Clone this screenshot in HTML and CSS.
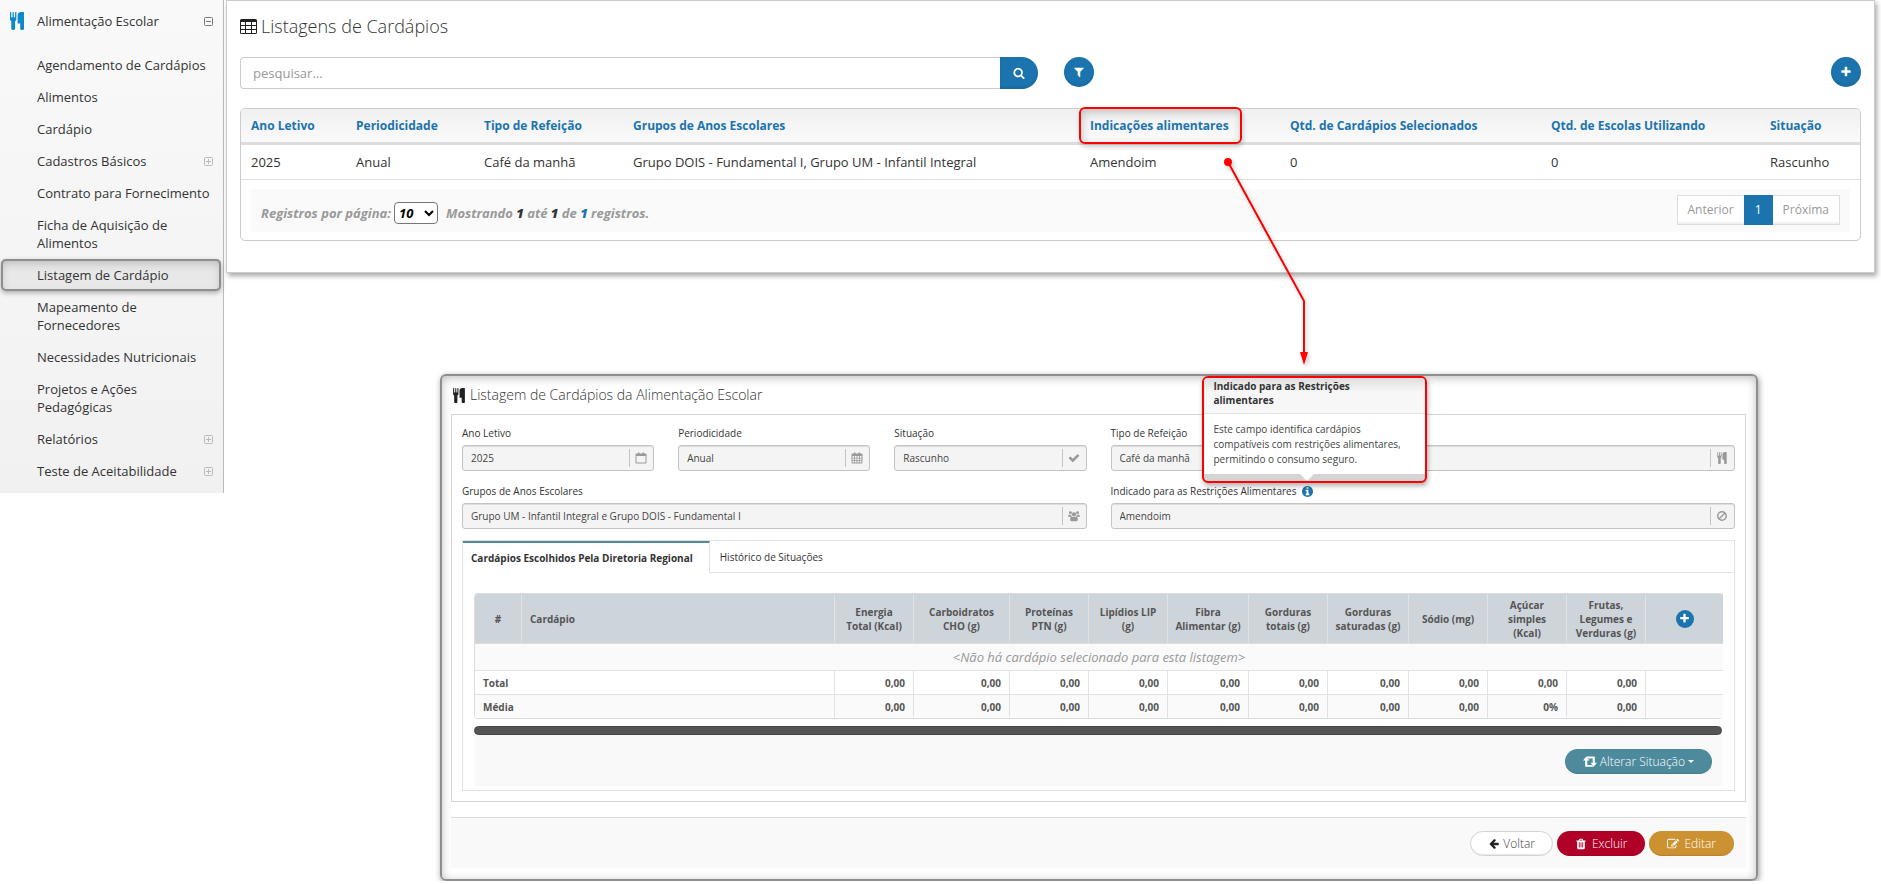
FILE: index.html
```html
<!DOCTYPE html>
<html lang="pt-BR">
<head>
  <meta charset="UTF-8" />
  <meta name="viewport" content="width=device-width, initial-scale=1.0"/>
  <title>Listagens de Cardápios</title>
  <link rel="stylesheet" href="styles.css">
</head>
<body>
  <!-- Icon set -->
  <svg class="sprite" aria-hidden="true">
    <symbol id="i-cutlery" viewBox="192 0 1408 1792"><path d="M832 64v640q0 61-35.500 111t-92.500 70v779q0 52-38 90t-90 38h-128q-52 0-90-38t-38-90v-779q-57-20-92.500-70t-35.500-111v-640q0-26 19-45t45-19 45 19 19 45v416q0 26 19 45t45 19 45-19 19-45v-416q0-26 19-45t45-19 45 19 19 45v416q0 26 19 45t45 19 45-19 19-45v-416q0-26 19-45t45-19 45 19 19 45zm768 0v1600q0 52-38 90t-90 38h-128q-52 0-90-38t-38-90v-512h-224q-13 0-22.500-9.500t-9.500-22.500v-800q0-132 94-226t226-94h256q26 0 45 19t19 45z"/></symbol>
    <symbol id="i-table" viewBox="0 0 17 15"><path fill-rule="evenodd" d="M1.500 0h14A1.500 1.500 0 0 1 17 1.500v12a1.500 1.500 0 0 1-1.500 1.500h-14A1.500 1.500 0 0 1 0 13.500v-12A1.500 1.500 0 0 1 1.500 0zM1 3v3h4V3zm5 0v3h5V3zm6 0v3h4V3zM1 7v3h4V7zm5 0v3h5V7zm6 0v3h4V7zM1 11v3h4v-3zm5 0v3h5v-3zm6 0v3h4v-3z"/></symbol>
    <symbol id="i-search" viewBox="0 0 1792 1792"><path d="M1216 832q0-185-131.500-316.500t-316.500-131.500-316.500 131.500-131.500 316.500 131.500 316.500 316.500 131.500 316.500-131.500 131.500-316.500zm512 832q0 52-38 90t-90 38q-54 0-90-38l-343-342q-179 124-399 124-143 0-273.500-55.500t-225-150-150-225-55.500-273.500 55.500-273.500 150-225 225-150 273.500-55.500 273.500 55.500 225 150 150 225 55.500 273.500q0 220-124 399l343 343q37 37 37 90z"/></symbol>
    <symbol id="i-filter" viewBox="0 0 1792 1792"><path d="M1595 295q17 41-14 70l-493 493v742q0 42-39 59-13 5-25 5-27 0-45-19l-256-256q-19-19-19-45v-486l-493-493q-31-29-14-70 17-39 59-39h1280q42 0 59 39z"/></symbol>
    <symbol id="i-plus" viewBox="0 0 1792 1792"><path d="M1600 736v192q0 40-28 68t-68 28h-416v416q0 40-28 68t-68 28h-192q-40 0-68-28t-28-68v-416h-416q-40 0-68-28t-28-68v-192q0-40 28-68t68-28h416v-416q0-40 28-68t68-28h192q40 0 68 28t28 68v416h416q40 0 68 28t28 68z"/></symbol>
    <symbol id="i-check" viewBox="0 0 1792 1792"><path d="M1671 566q0 40-28 68l-724 724-136 136q-28 28-68 28t-68-28l-136-136-362-362q-28-28-28-68t28-68l136-136q28-28 68-28t68 28l294 295 656-657q28-28 68-28t68 28l136 136q28 28 28 68z"/></symbol>
    <symbol id="i-ban" viewBox="0 0 12 12"><g fill="none" stroke="currentColor" stroke-width="1.500"><circle cx="6" cy="6" r="4.200"/><path d="M3 9l6-6"/></g></symbol>
    <symbol id="i-calendar-o" viewBox="0 0 12 12"><path fill-rule="evenodd" d="M1.500 1.500H3V.5h1.500v1h3v-1H9v1h1.500q1 0 1 1v8q0 1-1 1h-9q-1 0-1-1v-8q0-1 1-1zM1.500 4v6.500h9V4z"/></symbol>
    <symbol id="i-calendar" viewBox="0 0 12 12"><path fill-rule="evenodd" d="M1.500 1.500H3V.5h1.500v1h3v-1H9v1h1.500q1 0 1 1v8q0 1-1 1h-9q-1 0-1-1v-8q0-1 1-1zM1.500 4v1.700h1.600V4zm2.400 0v1.700h1.700V4zm2.500 0v1.700h1.700V4zm2.500 0v1.700h1.600V4zM1.500 6.400v1.700h1.600V6.400zm2.400 0v1.700h1.700V6.400zm2.500 0v1.700h1.700V6.400zm2.500 0v1.700h1.600V6.400zM1.500 8.800v1.700h1.600V8.800zm2.400 0v1.700h1.700V8.800zm2.500 0v1.700h1.700V8.800zm2.500 0v1.700h1.600V8.800z"/></symbol>
    <symbol id="i-users" viewBox="0 0 14 12"><circle cx="2.800" cy="2.200" r="1.700"/><circle cx="11.200" cy="2.200" r="1.700"/><circle cx="7" cy="4" r="2.500"/><path d="M0 6.600q0-2.200 1.400-2.200l2.200.4q.1 1.200.9 2H0zM14 6.600q0-2.200-1.400-2.200l-2.200.4q-.1 1.200-.9 2H14zM2.500 10.500q0-4 2.200-4 1 .8 2.300.8t2.300-.8q2.200 0 2.200 4 0 1.500-1.500 1.500H4q-1.500 0-1.500-1.500z"/></symbol>
    <symbol id="i-info" viewBox="128 128 1536 1536"><path d="M1152 1376v-160q0-14-9-23t-23-9h-96v-512q0-14-9-23t-23-9h-320q-14 0-23 9t-9 23v160q0 14 9 23t23 9h96v320h-96q-14 0-23 9t-9 23v160q0 14 9 23t23 9h448q14 0 23-9t9-23zm-128-896v-160q0-14-9-23t-23-9h-192q-14 0-23 9t-9 23v160q0 14 9 23t23 9h192q14 0 23-9t9-23zm640 416q0 209-103 385.500t-279.500 279.500-385.500 103-385.500-103-279.500-279.500-103-385.500 103-385.500 279.500-279.500 385.500-103 385.500 103 279.500 279.500 103 385.500z"/></symbol>
    <symbol id="i-arrow-left" viewBox="0 0 1792 1920"><path d="M1664 896v128q0 53-32.500 90.500t-84.500 37.500h-704l293 294q38 36 38 90t-38 90l-75 76q-37 37-90 37-52 0-91-37l-651-652q-37-37-37-90 0-52 37-91l651-650q38-38 91-38 52 0 90 38l75 74q38 38 38 91t-38 91l-293 293h704q52 0 84.500 37.500t32.500 90.500z"/></symbol>
    <symbol id="i-retweet" viewBox="0 0 13 10"><path d="M3 0l3 3.700H4v4h4.200L9.800 9.500H2.600Q2 9.500 2 9V3.700H0zM10 9.500L7 5.800h2v-4H4.800L3.200 0h7.200q.6 0 .6.600v5.200h2z"/></symbol>
    <symbol id="i-trash" viewBox="0 0 1792 1792"><path d="M704 1376v-704q0-14-9-23t-23-9h-64q-14 0-23 9t-9 23v704q0 14 9 23t23 9h64q14 0 23-9t9-23zm256 0v-704q0-14-9-23t-23-9h-64q-14 0-23 9t-9 23v704q0 14 9 23t23 9h64q14 0 23-9t9-23zm256 0v-704q0-14-9-23t-23-9h-64q-14 0-23 9t-9 23v704q0 14 9 23t23 9h64q14 0 23-9t9-23zm-544-992h448l-48-117q-7-9-17-11h-317q-10 2-17 11zm928 32v64q0 14-9 23t-23 9h-96v948q0 83-47 143.500t-113 60.500h-832q-66 0-113-58.500t-47-141.500v-952h-96q-14 0-23-9t-9-23v-64q0-14 9-23t23-9h309l70-167q15-37 54-63t79-26h320q40 0 79 26t54 63l70 167h309q14 0 23 9t9 23z"/></symbol>
    <symbol id="i-edit" viewBox="0 0 1792 1792"><path d="M888 1184l116-116-152-152-116 116v56h96v96h56zm440-720q-16-16-33 1l-350 350q-17 17-1 33t33-1l350-350q17-17 1-33zm80 594v190q0 119-84.500 203.500t-203.500 84.500h-832q-119 0-203.500-84.500t-84.500-203.500v-832q0-119 84.500-203.500t203.500-84.500h832q63 0 117 25 15 7 18 23 3 17-9 29l-49 49q-14 14-32 8-23-6-45-6h-832q-66 0-113 47t-47 113v832q0 66 47 113t113 47h832q66 0 113-47t47-113v-126q0-13 9-22l64-64q15-15 35-7t20 29zm-96-738l288 288-672 672h-288v-288zm444 132l-92 92-288-288 92-92q28-28 68-28t68 28l152 152q28 28 28 68t-28 68z"/></symbol>
    <symbol id="i-box-plus" viewBox="0 0 9 9"><path fill="none" stroke="currentColor" d="M1.500.5h6q1 0 1 1v6q0 1-1 1h-6q-1 0-1-1v-6q0-1 1-1zM2 4.500h5M4.500 2v5"/></symbol>
    <symbol id="i-box-minus" viewBox="0 0 9 9"><path fill="none" stroke="currentColor" d="M1.500.5h6q1 0 1 1v6q0 1-1 1h-6q-1 0-1-1v-6q0-1 1-1zM2 4.500h5"/></symbol>
  </svg>

  <div class="page">
    <nav class="sidebar">
      <a href="#" class="menu-title">
        <svg class="menu-icon"><use href="#i-cutlery"/></svg>
        <span>Alimentação Escolar</span>
        <svg class="toggle open"><use href="#i-box-minus"/></svg>
      </a>
      <ul class="menu">
        <li><a href="#">Agendamento de Cardápios</a></li>
        <li><a href="#">Alimentos</a></li>
        <li><a href="#">Cardápio</a></li>
        <li><a href="#">Cadastros Básicos <svg class="toggle"><use href="#i-box-plus"/></svg></a></li>
        <li><a href="#">Contrato para Fornecimento</a></li>
        <li><a href="#">Ficha de Aquisição de Alimentos</a></li>
        <li><a href="#" class="active">Listagem de Cardápio</a></li>
        <li><a href="#">Mapeamento de Fornecedores</a></li>
        <li><a href="#">Necessidades Nutricionais</a></li>
        <li><a href="#">Projetos e Ações Pedagógicas</a></li>
        <li><a href="#">Relatórios <svg class="toggle"><use href="#i-box-plus"/></svg></a></li>
        <li><a href="#">Teste de Aceitabilidade <svg class="toggle"><use href="#i-box-plus"/></svg></a></li>
      </ul>
    </nav>

    <main class="content">
      <section class="list-panel">
        <h1><svg class="title-icon"><use href="#i-table"/></svg>Listagens de Cardápios</h1>

        <div class="toolbar">
          <form class="search">
            <input type="text" placeholder="pesquisar..." aria-label="pesquisar" />
            <button type="submit" aria-label="Buscar"><svg class="icon"><use href="#i-search"/></svg></button>
          </form>
          <button class="round-btn" type="button" aria-label="Filtrar"><svg class="icon"><use href="#i-filter"/></svg></button>
          <button class="round-btn add" type="button" aria-label="Adicionar"><svg class="icon"><use href="#i-plus"/></svg></button>
        </div>

        <div class="list-box">
          <table class="list-table">
            <colgroup>
              <col class="w-year"><col class="w-period"><col class="w-meal"><col><col class="w-indic"><col class="w-menus"><col class="w-schools"><col class="w-status">
            </colgroup>
            <thead>
              <tr>
                <th>Ano Letivo</th>
                <th>Periodicidade</th>
                <th>Tipo de Refeição</th>
                <th>Grupos de Anos Escolares</th>
                <th class="marked">Indicações alimentares</th>
                <th>Qtd. de Cardápios Selecionados</th>
                <th>Qtd. de Escolas Utilizando</th>
                <th>Situação</th>
              </tr>
            </thead>
            <tbody>
              <tr>
                <td>2025</td>
                <td>Anual</td>
                <td>Café da manhã</td>
                <td>Grupo DOIS - Fundamental I, Grupo UM - Infantil Integral</td>
                <td>Amendoim</td>
                <td>0</td>
                <td>0</td>
                <td>Rascunho</td>
              </tr>
            </tbody>
          </table>
          <div class="list-footer">
            <div class="records">
              <label for="per-page">Registros por página:</label>
              <select id="per-page"><option>10</option></select>
              <span>Mostrando <b>1</b> até <b>1</b> de <b class="total">1</b> registros.</span>
            </div>
            <div class="pager">
              <button type="button">Anterior</button>
              <button type="button" class="current">1</button>
              <button type="button">Próxima</button>
            </div>
          </div>
        </div>
      </section>

      <section class="detail-panel">
        <h2><svg class="title-icon"><use href="#i-cutlery"/></svg>Listagem de Cardápios da Alimentação Escolar</h2>

        <div class="detail-box">
          <div class="fields">
            <div class="field">
              <label for="year">Ano Letivo</label>
              <div class="control"><input id="year" type="text" value="2025" readonly /><svg class="icon"><use href="#i-calendar-o"/></svg></div>
            </div>
            <div class="field">
              <label for="period">Periodicidade</label>
              <div class="control"><input id="period" type="text" value="Anual" readonly /><svg class="icon"><use href="#i-calendar"/></svg></div>
            </div>
            <div class="field">
              <label for="status">Situação</label>
              <div class="control"><input id="status" type="text" value="Rascunho" readonly /><svg class="icon"><use href="#i-check"/></svg></div>
            </div>
            <div class="field wide">
              <label for="meal">Tipo de Refeição</label>
              <div class="control"><input id="meal" type="text" value="Café da manhã" readonly /><svg class="icon"><use href="#i-cutlery"/></svg></div>
            </div>
            <div class="field wide">
              <label for="groups">Grupos de Anos Escolares</label>
              <div class="control"><input id="groups" type="text" value="Grupo UM - Infantil Integral e Grupo DOIS - Fundamental I" readonly /><svg class="icon"><use href="#i-users"/></svg></div>
            </div>
            <div class="field wide">
              <div class="label-row">
                <label for="restrictions">Indicado para as Restrições Alimentares</label>
                <span class="info">
                  <svg class="info-icon"><use href="#i-info"/></svg>
                  <span class="popover" role="tooltip">
                    <strong>Indicado para as Restrições alimentares</strong>
                    <span class="popover-text">Este campo identifica cardápios compatíveis com restrições alimentares, permitindo o consumo seguro.</span>
                  </span>
                </span>
              </div>
              <div class="control"><input id="restrictions" type="text" value="Amendoim" readonly /><svg class="icon"><use href="#i-ban"/></svg></div>
            </div>
          </div>

          <div class="tab-box">
            <div class="tabs">
              <button type="button" class="tab selected">Cardápios Escolhidos Pela Diretoria Regional</button>
              <button type="button" class="tab">Histórico de Situações</button>
            </div>
            <div class="tab-body">
              <table class="menu-table">
                <colgroup>
                  <col class="c-num"><col><col class="c-std"><col class="c-wide"><col class="c-std"><col class="c-std"><col class="c-mid"><col class="c-std"><col class="c-mid"><col class="c-std"><col class="c-std"><col class="c-std"><col class="c-add">
                </colgroup>
                <thead>
                  <tr>
                    <th>#</th>
                    <th class="left">Cardápio</th>
                    <th>Energia Total (Kcal)</th>
                    <th>Carboidratos CHO (g)</th>
                    <th>Proteínas PTN (g)</th>
                    <th>Lipídios LIP (g)</th>
                    <th>Fibra Alimentar (g)</th>
                    <th>Gorduras totais (g)</th>
                    <th>Gorduras saturadas (g)</th>
                    <th>Sódio (mg)</th>
                    <th>Açúcar simples (Kcal)</th>
                    <th>Frutas, Legumes e Verduras (g)</th>
                    <th><button type="button" class="add-row" aria-label="Adicionar cardápio"><svg><use href="#i-plus"/></svg></button></th>
                  </tr>
                </thead>
                <tbody>
                  <tr class="empty"><td colspan="13">&lt;Não há cardápio selecionado para esta listagem&gt;</td></tr>
                  <tr>
                    <th colspan="2">Total</th>
                    <td>0,00</td><td>0,00</td><td>0,00</td><td>0,00</td><td>0,00</td><td>0,00</td><td>0,00</td><td>0,00</td><td>0,00</td><td>0,00</td><td></td>
                  </tr>
                  <tr class="shaded">
                    <th colspan="2">Média</th>
                    <td>0,00</td><td>0,00</td><td>0,00</td><td>0,00</td><td>0,00</td><td>0,00</td><td>0,00</td><td>0,00</td><td>0%</td><td>0,00</td><td></td>
                  </tr>
                </tbody>
              </table>
              <div class="scroll-track"></div>
              <div class="tab-actions">
                <button type="button" class="btn teal"><svg class="icon"><use href="#i-retweet"/></svg>Alterar Situação<span class="caret"></span></button>
              </div>
            </div>
          </div>
        </div>

        <div class="detail-footer">
          <button type="button" class="btn white"><svg class="icon"><use href="#i-arrow-left"/></svg>Voltar</button>
          <button type="button" class="btn red"><svg class="icon"><use href="#i-trash"/></svg>Excluir</button>
          <button type="button" class="btn gold"><svg class="icon"><use href="#i-edit"/></svg>Editar</button>
        </div>
      </section>

      <!-- Arrow from the column to the explanation -->
      <svg class="callout-arrow" width="100" height="220" viewBox="0 0 100 220">
        <circle cx="12" cy="12" r="4" fill="#f00"/>
        <path d="M12 12L88 151V204" fill="none" stroke="#f00" stroke-width="2"/>
        <path d="M84 202h8l-4 13z" fill="#f00"/>
      </svg>
    </main>
  </div>
</body>
</html>
```
FILE: styles.css
```css
*,
*::before,
*::after {
  box-sizing: border-box;
}

body {
  margin: 0;
  background-color: #fff;
  color: #333;
  font-family: 'Open Sans', 'Noto Sans', sans-serif;
  font-size: 13px;
  line-height: 18px;
}

button,
input,
select {
  font: inherit;
}

button {
  cursor: pointer;
}

a {
  color: inherit;
  text-decoration: none;
}

svg {
  fill: currentColor;
}

.sprite {
  display: none;
}

.page {
  display: flex;
  align-items: flex-start;
}

/* Sidebar */
.sidebar {
  flex: 0 0 224px;
  padding: 5px 0 6px;
  border-right: 1px solid #bbb;
  background: linear-gradient(#f9f9f9, #f1f1f1);
}

.menu-title {
  display: flex;
  align-items: center;
  gap: 13px;
  height: 32px;
  padding: 0 10px;
}

.menu-icon {
  width: 14px;
  height: 18px;
  color: #0a8ac9;
}

.toggle {
  flex: none;
  width: 9px;
  height: 9px;
  margin-left: auto;
  color: #bbb;
}

.toggle.open {
  color: #777;
}

.menu {
  margin: 12px 0 0;
  padding: 0;
  list-style: none;
}

.menu a {
  display: flex;
  align-items: center;
  padding: 7px 10px 7px 37px;
}

.menu a.active {
  margin: 0 2px 0 1px;
  padding: 7px 10px 7px 36px;
  border-radius: 5px;
  background-color: #e8e8e8;
  box-shadow: inset 0 0 0 2px #8e8e8e, inset 0 4px 10px rgba(0, 0, 0, 0.2), 0 2px 5px rgba(0, 0, 0, 0.3);
}

/* Content */
.content {
  position: relative;
  flex: 1;
  min-width: 0;
  padding: 0 6px 0 2px;
}

h1,
h2 {
  margin: 0;
  display: flex;
  align-items: center;
  gap: 4px;
  color: #333;
  font-weight: 300;
}

.icon {
  width: 12px;
  height: 12px;
}

.list-panel {
  padding: 13px 13px 31px;
  border: 1px solid #ccc;
  box-shadow: 2px 3px 5px rgba(0, 0, 0, 0.35);
}

h1 {
  font-size: 18px;
  line-height: 24px;
}

h1 .title-icon {
  width: 17px;
  height: 15px;
  color: #222;
}

.toolbar {
  display: flex;
  align-items: flex-start;
  margin: 19px 0;
}

.search {
  display: flex;
  flex: 0 0 798px;
}

.search input {
  flex: 1;
  height: 32px;
  padding: 0 12px;
  border: 1px solid #ccc;
  border-right: 0;
  border-radius: 4px 0 0 4px;
}

.search input::placeholder {
  color: #999;
}

.search button,
.round-btn {
  display: flex;
  align-items: center;
  justify-content: center;
  padding: 0;
  border: 0;
  background-color: #1b74ae;
  color: #fff;
  box-shadow: inset 0 -2px 2px rgba(0, 0, 0, 0.1);
}

.search button {
  width: 38px;
  height: 32px;
  border-radius: 0 16px 16px 0;
}

.round-btn {
  width: 30px;
  height: 30px;
  margin-left: 26px;
  border-radius: 50%;
}

.round-btn.add {
  margin-left: auto;
}

.list-box {
  border: 1px solid #ccc;
  border-radius: 5px;
}

.list-table {
  width: 100%;
  border-collapse: separate;
  border-spacing: 0;
  table-layout: fixed;
}

.w-year { width: 105px; }
.w-period { width: 128px; }
.w-meal { width: 149px; }
.w-indic { width: 200px; }
.w-menus { width: 261px; }
.w-schools { width: 219px; }
.w-status { width: 100px; }

.list-table th {
  height: 36px;
  padding: 0 10px;
  border-bottom: 3px solid #ddd;
  background: linear-gradient(#f0f0f0, #fafafa);
  color: #1b74ae;
  font-size: 12px;
  text-align: left;
  white-space: nowrap;
}

.list-table th:first-child {
  border-top-left-radius: 4px;
}

.list-table th:last-child {
  border-top-right-radius: 4px;
}

.list-table td {
  height: 35px;
  padding: 0 10px;
  border-bottom: 1px solid #ddd;
}

/* Red frame over the column header */
.marked {
  position: relative;
}

.marked::after {
  content: "";
  position: absolute;
  top: -2px;
  left: -1px;
  width: 163px;
  height: 37px;
  border: 2px solid #f00;
  border-radius: 6px;
  box-shadow: inset 1px 3px 8px rgba(0, 0, 0, 0.2), 1px 3px 5px rgba(0, 0, 0, 0.2);
}

.list-footer {
  display: flex;
  justify-content: space-between;
  align-items: flex-start;
  margin: 9px 10px 8px;
  padding: 6px 10px 7px;
  background-color: #fafafa;
}

.records {
  display: flex;
  align-items: center;
  margin-top: 7px;
  color: #999;
  font-style: italic;
  font-weight: 700;
}

.records select {
  width: 44px;
  height: 22px;
  margin: 0 8px 0 3px;
  border: 1px solid #767676;
  border-radius: 4px;
  background-color: #fff;
  color: #000;
}

.records b {
  color: #333;
}

.records .total {
  color: #1b74ae;
}

.pager {
  display: flex;
}

.pager button {
  height: 30px;
  padding: 0 10px;
  border: 1px solid #ddd;
  background-color: #fff;
  color: #999;
  font-size: 12px;
  box-shadow: inset 0 -2px 0 #f1f1f1;
}

.pager button + button {
  margin-left: -1px;
}

.pager .current {
  position: relative;
  width: 29px;
  border-color: #1b74ae;
  background-color: #1b74ae;
  color: #fff;
  box-shadow: none;
}

/* Detail panel */
.detail-panel {
  margin: 101px 117px 0 214px;
  padding: 9px 10px 11px 9px;
  border: 2px solid #8e8e8e;
  border-radius: 6px;
  box-shadow: inset 0 2px 10px rgba(0, 0, 0, 0.25), 1px 2px 6px rgba(0, 0, 0, 0.4);
}

h2 {
  margin-left: 1px;
  font-size: 14px;
  line-height: 20px;
}

h2 .title-icon {
  width: 14px;
  height: 15px;
  color: #222;
}

.detail-box {
  margin-top: 9px;
  padding: 10px;
  border: 1px solid #d4d4d4;
}

.fields {
  display: grid;
  grid-template-columns: repeat(6, 1fr);
  gap: 12px 24px;
  color: #333;
  font-size: 10px;
  line-height: 16px;
}

.field {
  display: flex;
  flex-direction: column;
  gap: 4px;
  min-width: 0;
}

.field.wide {
  grid-column: span 3;
}

.label-row {
  display: flex;
  align-items: center;
  gap: 6px;
  height: 16px;
}

.control {
  display: flex;
  align-items: center;
  height: 26px;
  padding-right: 6px;
  border: 1px solid #c4c4c4;
  border-radius: 3px;
  background-color: #f4f4f4;
  box-shadow: inset 0 1px 0 #ddd;
}

.control input {
  flex: 1;
  min-width: 0;
  height: 18px;
  padding: 0 8px;
  border: 0;
  border-right: 1px solid #c4c4c4;
  background: none;
  color: #444;
}

.control .icon {
  margin-left: 5px;
  color: #999;
}

.info {
  position: relative;
  display: flex;
  color: #1b74ae;
}

.info-icon {
  width: 11px;
  height: 11px;
}

.popover {
  position: absolute;
  bottom: 14px;
  left: -100px;
  width: 225px;
  padding-bottom: 7px;
  border: 2px solid #f00;
  border-radius: 6px;
  background-color: #d4d4d4;
  box-shadow: 1px 3px 5px rgba(0, 0, 0, 0.3);
  color: #444;
  z-index: 1;
}

.popover strong {
  display: block;
  padding: 1px 50px 6px 9px;
  border-bottom: 1px solid #e4e4e4;
  border-radius: 4px 4px 0 0;
  background: linear-gradient(#dedede, #f7f7f7 14px);
  color: #333;
  line-height: 14px;
}

.popover-text {
  display: block;
  padding: 8px 8px 7px 9px;
  background-color: #fff;
  line-height: 15px;
}

.popover::after {
  content: "";
  position: absolute;
  bottom: 0;
  left: 95px;
  border: 8px solid transparent;
  border-top: 8px solid #fff;
  border-bottom: 0;
}

/* Tabs */
.tab-box {
  margin-top: 11px;
  border: 1px solid #e2e2e2;
}

.tabs {
  display: flex;
}

.tabs::after {
  content: "";
  flex: 1;
  border-bottom: 1px solid #e2e2e2;
}

.tab {
  height: 32px;
  padding: 0 10px;
  border: 0;
  border-bottom: 1px solid #e2e2e2;
  background: none;
  color: #333;
  font-size: 10px;
}

.tab.selected {
  padding: 0 16px 0 8px;
  border-top: 2px solid #4d8a9c;
  border-right: 1px solid #e2e2e2;
  border-bottom: 0;
  font-weight: 700;
}

.tab-body {
  padding: 20px 11px 4px;
}

.menu-table {
  width: 100%;
  border: 1px solid #ddd;
  border-right: 0;
  border-radius: 4px;
  border-collapse: separate;
  border-spacing: 0;
  table-layout: fixed;
  color: #555;
  font-size: 10px;
  line-height: 14px;
}

.c-num { width: 47px; }
.c-std { width: 79px; }
.c-mid { width: 81px; }
.c-wide { width: 96px; }
.c-add { width: 77px; }

.menu-table th,
.menu-table td {
  padding: 0 8px;
  border-right: 1px solid #e2e2e2;
}

.menu-table tr > :last-child {
  border-right: 0;
}

.menu-table thead th {
  height: 50px;
  padding: 0 7px;
  border-bottom: 1px solid #ddd;
  background-color: #cdd4da;
}

.menu-table thead th:first-child {
  border-top-left-radius: 3px;
}

.menu-table thead .left {
  padding-left: 8px;
}

.menu-table tbody th,
.menu-table thead .left {
  text-align: left;
}

.menu-table tbody td {
  height: 24px;
  font-weight: 700;
  text-align: right;
}

.menu-table tr + tr > * {
  border-top: 1px solid #e2e2e2;
}

.menu-table .empty td {
  height: 26px;
  background-color: #fafafa;
  color: #999;
  font-size: 13px;
  font-style: italic;
  font-weight: 400;
  text-align: center;
}

.menu-table .shaded > * {
  background-color: #fafafa;
}

.add-row {
  display: inline-flex;
  align-items: center;
  justify-content: center;
  width: 18px;
  height: 18px;
  padding: 0;
  border: 0;
  border-radius: 50%;
  background-color: #1b74ae;
  color: #fff;
}

.add-row svg {
  width: 11px;
  height: 11px;
}

.scroll-track {
  height: 9px;
  margin: 7px 1px 0 0;
  border: 1px solid #444;
  border-radius: 5px;
  background-color: #555;
}

.tab-actions {
  display: flex;
  justify-content: flex-end;
  padding: 14px 11px 12px;
  background-color: #f9f9f9;
}

.btn {
  display: flex;
  align-items: center;
  justify-content: center;
  gap: 3px;
  height: 25px;
  padding: 0 18px;
  border: 0;
  border-radius: 13px;
  color: #fff;
  font-size: 12px;
  font-weight: 300;
  box-shadow: inset 0 -1px 1px rgba(0, 0, 0, 0.1);
}

.btn.teal {
  background-color: #4d8a9c;
}

.btn.teal .icon {
  width: 14px;
}

.btn.white {
  padding: 0 17px;
  border: 1px solid #d4d4d4;
  background-color: #fff;
  color: #444;
}

.btn.white .icon {
  color: #222;
}

.btn.red {
  gap: 5px;
  background-color: #b10027;
}

.btn.gold {
  gap: 5px;
  background-color: #cc9130;
}

.caret {
  border: 3px solid transparent;
  border-top-color: #fff;
  border-bottom: 0;
}

.detail-footer {
  display: flex;
  justify-content: flex-end;
  gap: 4px;
  margin-top: 15px;
  padding: 13px 12px 12px;
  border-top: 1px solid #ddd;
  background-color: #f9f9f9;
}

.callout-arrow {
  position: absolute;
  top: 150px;
  left: 992px;
  filter: drop-shadow(2px 3px 2px rgba(0, 0, 0, 0.2));
  pointer-events: none;
}
```
